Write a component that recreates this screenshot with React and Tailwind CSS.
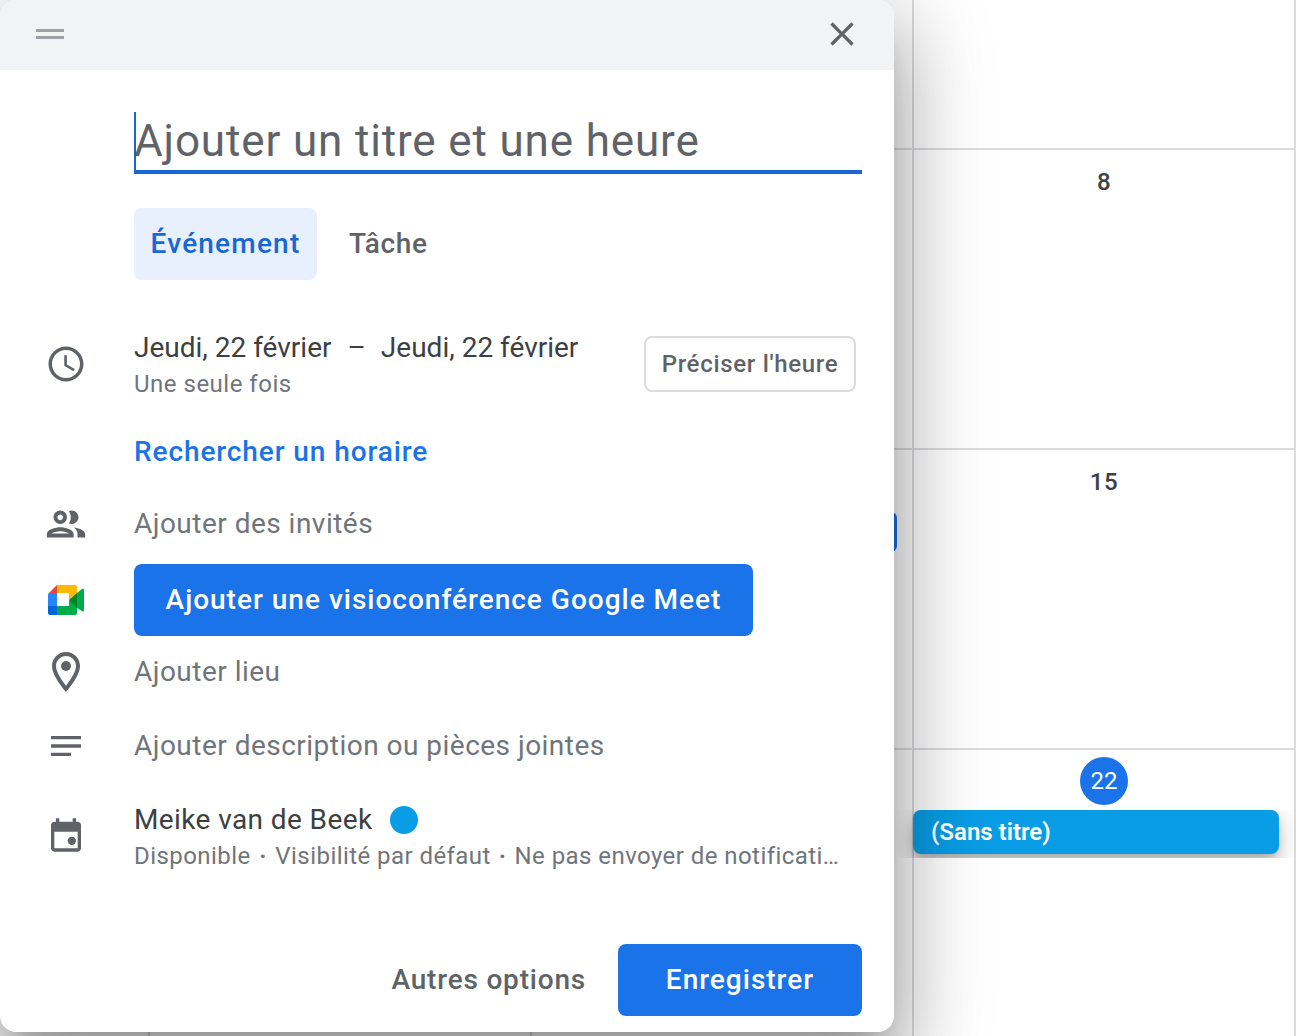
const sans = "font-['Roboto',sans-serif]";

const CloseIcon = () => (
  <svg width="40" height="40" viewBox="0 0 24 24" fill="#5f6368" className="mb-[2px]">
    <path d="M19 6.41L17.59 5 12 10.59 6.41 5 5 6.41 10.59 12 5 17.59 6.41 19 12 13.41 17.59 19 19 17.59 13.41 12z" />
  </svg>
);

const ClockIcon = () => (
  <svg width="42" height="42" viewBox="0 0 24 24" fill="#5f6368">
    <path d="M11.99 2C6.47 2 2 6.48 2 12s4.47 10 9.99 10C17.52 22 22 17.52 22 12S17.52 2 11.99 2zM12 20c-4.42 0-8-3.58-8-8s3.58-8 8-8 8 3.58 8 8-3.58 8-8 8z" />
    <path d="M12.5 7H11v6l5.25 3.15.75-1.23-4.5-2.67z" />
  </svg>
);

const PeopleIcon = () => (
  <svg width="46" height="46" viewBox="0 0 24 24" fill="#5f6368">
    <path d="M9 13.75c-2.34 0-7 1.17-7 3.5V19h14v-1.75c0-2.33-4.66-3.5-7-3.5zM4.34 17c.84-.58 2.87-1.25 4.66-1.25s3.82.67 4.66 1.25H4.34zM9 12c1.93 0 3.5-1.57 3.5-3.5S10.93 5 9 5 5.5 6.57 5.5 8.5 7.07 12 9 12zm0-5c.83 0 1.5.67 1.5 1.5S9.83 10 9 10s-1.5-.67-1.5-1.5S8.17 7 9 7zm7.04 6.81c1.16.84 1.96 1.96 1.96 3.44V19h4v-1.75c0-2.02-3.5-3.17-5.96-3.44zM15 12c1.93 0 3.5-1.57 3.5-3.5S16.93 5 15 5c-.54 0-1.04.13-1.5.35.63.89 1 1.98 1 3.15s-.37 2.26-1 3.15c.46.22.96.35 1.5.35z" />
  </svg>
);

const MeetIcon = () => (
  <svg width="36" height="30" viewBox="0 0 36 30">
    <path d="M0 9 L9 0 V9 Z" fill="#ea4335" />
    <path d="M9 0 H27 Q29 0 29 2 V9 L21 15 V8 H9 Z" fill="#ffba00" />
    <path d="M0 9 H9 V21 H0 Z" fill="#2684fc" />
    <path d="M0 21 H9 V30 H2 Q0 30 0 28 Z" fill="#0066da" />
    <path d="M9 21 H21 V15 L29 21 V28 Q29 30 27 30 H9 Z" fill="#00ac47" />
    <path d="M21 15 L29 8 V23 Z" fill="#00832d" />
    <path d="M29 8 L34 4 Q36 2.5 36 5 V25 Q36 27.5 34 26 L29 23 Z" fill="#00ac47" />
  </svg>
);

const PinIcon = () => (
  <svg width="48" height="48" viewBox="0 0 24 24" fill="#5f6368">
    <path d="M12 2C8.13 2 5 5.13 5 9c0 5.25 7 13 7 13s7-7.75 7-13c0-3.87-3.13-7-7-7zm0 16.9C10.2 16.5 7 12 7 9c0-2.76 2.24-5 5-5s5 2.24 5 5c0 3-3.2 7.5-5 9.9z" />
    <circle cx="12" cy="9" r="2.5" />
  </svg>
);

const NotesIcon = () => (
  <svg width="40" height="40" viewBox="0 0 24 24" fill="#5f6368">
    <path d="M3 6h18v2H3zM3 11h18v2H3zM3 16h12v2H3z" />
  </svg>
);

const CalendarIcon = () => (
  <svg width="40" height="40" viewBox="0 0 24 24" fill="#5f6368">
    <path d="M19 4h-1V2h-2v2H8V2H6v2H5c-1.1 0-2 .9-2 2v14c0 1.1.9 2 2 2h14c1.1 0 2-.9 2-2V6c0-1.1-.9-2-2-2zm0 16H5V10h14v10z" />
    <circle cx="15.5" cy="15.5" r="2.5" />
  </svg>
);

const Row = ({ icon, className, children }) => (
  <div className={`flex items-center ${className}`}>
    <div className="flex w-[134px] shrink-0 justify-center pr-[2px]">{icon}</div>
    {children}
  </div>
);

const Cell = ({ children, className = "" }) => (
  <div className={`flex flex-col items-center border-r-2 border-b-2 border-[#dadce0] ${className}`}>{children}</div>
);

export default function App() {
  return (
    <div className={`relative h-[1036px] w-[1296px] overflow-hidden bg-white ${sans}`}>
      <div className="grid grid-cols-[150px_382px_382px_382px] grid-rows-[150px_300px_300px_300px]">
        <Cell /><Cell /><Cell /><Cell />
        <Cell /><Cell /><Cell />
        <Cell className="pt-[18px] text-[24px] leading-[28px] font-medium tracking-[0.5px] text-[#3c4043]">8</Cell>
        <Cell /><Cell />
        <Cell />
        <Cell className="pt-[18px] text-[24px] leading-[28px] font-medium tracking-[0.5px] text-[#3c4043]">15</Cell>
        <Cell /><Cell /><Cell />
        <Cell className="pt-[7px]">
          <div className="flex h-[48px] w-[48px] items-center justify-center rounded-full bg-[#1a73e8] text-[24px] text-white">22</div>
          <div className="mt-[5px] -ml-[20px] h-[48px] w-[402px] self-start overflow-hidden pl-[19px]">
            <div className="flex h-[44px] w-[366px] items-center rounded-[8px] bg-[#099de6] pl-[18px] text-[24px] font-semibold text-white shadow-[0_12px_20px_rgba(0,0,0,0.14),0_2px_36px_rgba(0,0,0,0.12),0_6px_10px_-2px_rgba(0,0,0,0.2)]">(Sans titre)</div>
          </div>
        </Cell>
      </div>

      {/* event sticking out from under the dialog */}
      <div className="absolute top-[512px] left-[860px] h-[40px] w-[37px] rounded-[6px] bg-[#1a73e8]" />

      <div className="absolute top-0 left-0 flex h-[1032px] w-[894px] flex-col overflow-hidden rounded-[16px] bg-white text-[#5f6368] shadow-[0_48px_76px_6px_rgba(0,0,0,0.2),0_18px_92px_16px_rgba(0,0,0,0.18),0_22px_30px_-14px_rgba(0,0,0,0.2)]">
        <div className="flex h-[70px] shrink-0 items-center justify-between bg-[#f1f3f4] pr-[32px] pl-[36px]">
          <div className="mb-[2px] flex flex-col gap-[4px]">
            <div className="h-[3px] w-[28px] bg-[#9aa0a6]" />
            <div className="h-[3px] w-[28px] bg-[#9aa0a6]" />
          </div>
          <CloseIcon />
        </div>

        <div className="mt-[42px] ml-[134px] w-[728px] border-b-[4px] border-[#1967d2]">
          <div className="h-[58px] border-l-2 border-[#1967d2] text-[44px] leading-[58px] tracking-[0.85px] whitespace-nowrap">
            <span className="-ml-[2px]">Ajouter un titre et une heure</span>
          </div>
        </div>

        <div className="mt-[34px] ml-[134px] flex text-[28px] font-medium">
          <div className="flex h-[72px] w-[183px] items-center justify-center rounded-[8px] bg-[#e8f0fe] tracking-[1.2px] text-[#1967d2]">Événement</div>
          <div className="ml-[32px] flex h-[72px] items-center tracking-[0.6px]">Tâche</div>
        </div>

        <Row icon={<ClockIcon />} className="mt-[52px] h-[64px]">
          <div className="w-[510px]">
            <div className="flex text-[28px] leading-[36px] whitespace-nowrap text-[#3c4043]">
              Jeudi, 22 février
              <span className="mr-[15px] ml-[16px]">–</span>
              Jeudi, 22 février
            </div>
            <div className="mt-[4px] text-[24px] leading-[28px] tracking-[0.5px] text-[#70757a]">Une seule fois</div>
          </div>
          <div className="flex h-[56px] w-[212px] items-center justify-center rounded-[8px] border-2 border-[#dadce0] text-[24px] font-medium tracking-[0.7px]">Préciser l'heure</div>
        </Row>

        <div className="mt-[38px] ml-[134px] text-[28px] leading-[36px] font-medium tracking-[0.9px] text-[#1a73e8]">Rechercher un horaire</div>

        <Row icon={<PeopleIcon />} className="mt-[36px] h-[36px]">
          <div className="text-[28px] tracking-[0.48px] text-[#70757a]">Ajouter des invités</div>
        </Row>

        <Row icon={<MeetIcon />} className="mt-[22px] h-[72px]">
          <div className="flex h-[72px] w-[619px] items-center justify-center rounded-[8px] bg-[#1a73e8] text-[28px] font-medium tracking-[1px] text-white">Ajouter une visioconférence Google Meet</div>
        </Row>

        <Row icon={<PinIcon />} className="mt-[18px] h-[36px]">
          <div className="text-[28px] tracking-[0.48px] text-[#70757a]">Ajouter lieu</div>
        </Row>

        <Row icon={<NotesIcon />} className="mt-[38px] h-[36px]">
          <div className="text-[28px] tracking-[0.48px] text-[#70757a]">Ajouter description ou pièces jointes</div>
        </Row>

        <Row icon={<CalendarIcon />} className="mt-[39px] h-[64px]">
          <div className="mt-[2px] w-[740px]">
            <div className="flex items-center text-[28px] leading-[36px] tracking-[0.4px] text-[#3c4043]">
              Meike van de Beek
              <span className="ml-[17px] h-[28px] w-[28px] rounded-full bg-[#099de6]" />
            </div>
            <div className="mt-[4px] text-[24px] leading-[28px] tracking-[0.44px] whitespace-nowrap text-[#70757a]">
              Disponible<span className="mx-[8.5px] font-bold">·</span>Visibilité par défaut<span className="mx-[8px] font-bold">·</span>Ne pas envoyer de notificati…
            </div>
          </div>
        </Row>

        <div className="mt-auto mr-[32px] mb-[16px] flex items-center justify-end">
          <div className="mr-[32px] text-[28px] font-medium tracking-[0.8px]">Autres options</div>
          <div className="flex h-[72px] w-[244px] items-center justify-center rounded-[8px] bg-[#1a73e8] text-[28px] font-medium tracking-[1px] text-white">Enregistrer</div>
        </div>
      </div>
    </div>
  );
}
